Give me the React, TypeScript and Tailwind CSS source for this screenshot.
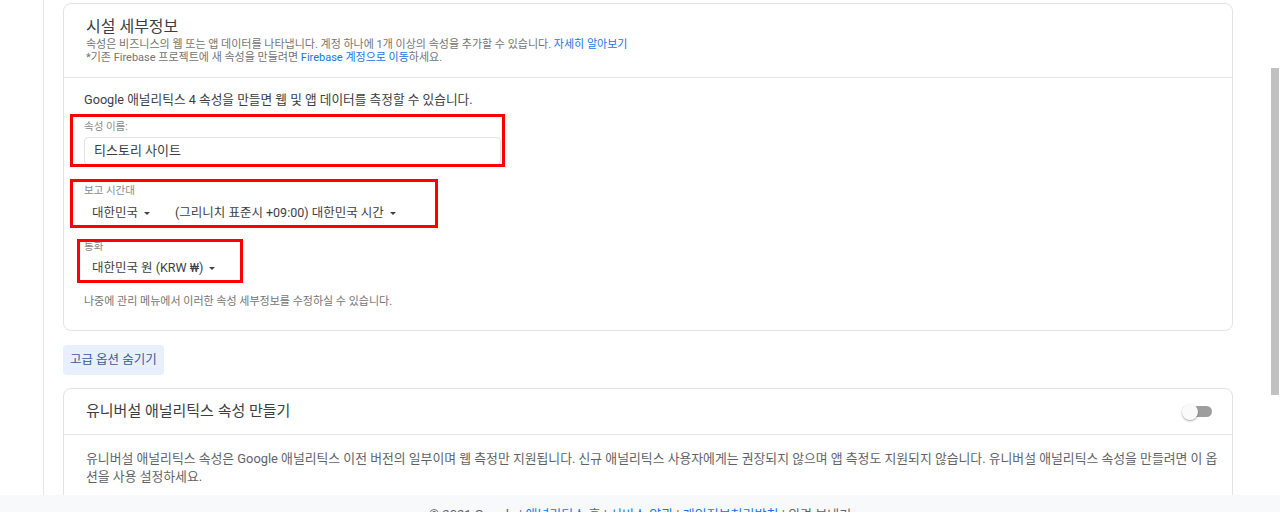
import React from "react";

const Caret: React.FC = () => (
  <span className="inline-block ml-[6px] w-0 h-0 border-x-[3px] border-x-transparent border-t-[3px] border-t-[#424242] align-middle" />
);

const App: React.FC = () => {
  return (
    <div
      className="w-[1280px] h-[512px] overflow-hidden bg-white flex flex-col text-[#202124]"
      style={{ fontFamily: "Roboto, 'Noto Sans CJK KR', sans-serif" }}
    >
      <div className="h-[495px] flex shrink-0">
        {/* main column */}
        <div className="flex-1 pl-[43px] overflow-hidden">
          <div className="h-full border-l border-[#e8e8e8] pl-[19px] pr-[37px] pt-[3px]">
            {/* property details card */}
            <div className="relative border border-[#e3e3e3] rounded-[8px] bg-white">
              <div className="px-[22px] pt-[13px] h-[74px] border-b border-[#e6e6e6]">
                <h2 className="text-[16px] leading-[20px] text-[#3c4043]">시설 세부정보</h2>
                <p className="mt-[1px] text-[11px] leading-[13px] text-[#757575]">
                  속성은 비즈니스의 웹 또는 앱 데이터를 나타냅니다. 계정 하나에 1개 이상의 속성을 추가할 수 있습니다.{" "}
                  <span className="text-[#1a73e8]">자세히 알아보기</span>
                </p>
                <p className="text-[11px] leading-[13px] text-[#757575]">
                  *기존 Firebase 프로젝트에 새 속성을 만들려면{" "}
                  <span className="text-[#1a73e8]">Firebase 계정으로 이동</span>하세요.
                </p>
              </div>

              <div className="px-[20px] pt-[13px] pb-[22px]">
                <p className="text-[12.7px] leading-[18px] text-[#3c4043]">
                  Google 애널리틱스 4 속성을 만들면 웹 및 앱 데이터를 측정할 수 있습니다.
                </p>

                {/* property name */}
                <div className="mt-[12px]">
                  <div className="text-[10.5px] leading-[12px] text-[#8a8a8a]">속성 이름:</div>
                  <div className="mt-[4px] w-[417px] h-[28px] border border-[#e3e3e3] rounded-[4px] flex items-center px-[9px] text-[13px] text-[#3c4043]">
                    티스토리 사이트
                  </div>
                </div>

                {/* timezone */}
                <div className="mt-[20px]">
                  <div className="text-[10.5px] leading-[12px] text-[#8a8a8a]">보고 시간대</div>
                  <div className="mt-[8px] flex items-center pl-[8px] text-[12.5px] leading-[16px] text-[#3c4043]">
                    <span className="flex items-center">
                      대한민국
                      <Caret />
                    </span>
                    <span className="ml-[25px] flex items-center">
                      (그리니치 표준시 +09:00) 대한민국 시간
                      <Caret />
                    </span>
                  </div>
                </div>

                {/* currency */}
                <div className="mt-[20px]">
                  <div className="text-[10.5px] leading-[12px] text-[#8a8a8a]">통화</div>
                  <div className="mt-[7px] flex items-center pl-[8px] text-[12.5px] leading-[16px] text-[#3c4043]">
                    대한민국 원 (KRW ₩)
                    <Caret />
                  </div>
                </div>

                <p className="mt-[19px] text-[11px] leading-[13px] text-[#757575]">
                  나중에 관리 메뉴에서 이러한 속성 세부정보를 수정하실 수 있습니다.
                </p>
              </div>

              {/* red annotation boxes */}
              <div className="absolute left-[6px] top-[110px] w-[435px] h-[53px] border-[3px] border-[#ff0000]" />
              <div className="absolute left-[6px] top-[175px] w-[368px] h-[49px] border-[3px] border-[#ff0000]" />
              <div className="absolute left-[13px] top-[235px] w-[166px] h-[44px] border-[3px] border-[#ff0000]" />
            </div>

            <button className="block mt-[14px] h-[30px] px-[7px] rounded-[4px] bg-[#e8f0fe] text-[12.5px] text-[#3b5998]">
              고급 옵션 숨기기
            </button>

            {/* universal analytics card */}
            <div className="mt-[13px] border border-[#e3e3e3] rounded-[8px] bg-white">
              <div className="h-[46px] px-[22px] flex items-center justify-between border-b border-[#e6e6e6]">
                <span className="text-[15px] text-[#3c4043]">유니버설 애널리틱스 속성 만들기</span>
                <span className="relative w-[30px] h-[16px] mr-[-2px] flex items-center">
                  <span className="absolute right-0 w-[26px] h-[11px] rounded-full bg-[#9e9e9e]" />
                  <span className="absolute left-0 w-[16px] h-[16px] rounded-full bg-[#fafafa] shadow-[0_1px_2px_rgba(0,0,0,0.35)]" />
                </span>
              </div>
              <div className="pl-[22px] pr-[12px] pt-[15px] pb-[20px]">
                <p className="text-[12.85px] leading-[18px] text-[#5f6368] break-all">
                  유니버설 애널리틱스 속성은 Google 애널리틱스 이전 버전의 일부이며 웹 측정만 지원됩니다. 신규 애널리틱스 사용자에게는 권장되지 않으며 앱 측정도 지원되지 않습니다. 유니버설 애널리틱스 속성을 만들려면 이 옵션을 사용 설정하세요.
                </p>
              </div>
            </div>
          </div>
        </div>

        {/* scrollbar */}
        <div className="w-[10px] shrink-0 pt-[68px] pl-[1px]">
          <div className="w-[8px] h-[327px] bg-[#c1c1c1]" />
        </div>
      </div>

      {/* footer */}
      <div className="h-[40px] shrink-0 bg-[#f8f9fa] pt-[10px] text-center text-[13px] text-[#5f6368]">
        © 2021 Google | <span className="text-[#1a73e8]">애널리틱스 홈</span> |{" "}
        <span className="text-[#1a73e8]">서비스 약관</span> |{" "}
        <span className="text-[#1a73e8]">개인정보처리방침</span> | 의견 보내기
      </div>
    </div>
  );
};

export default App;
